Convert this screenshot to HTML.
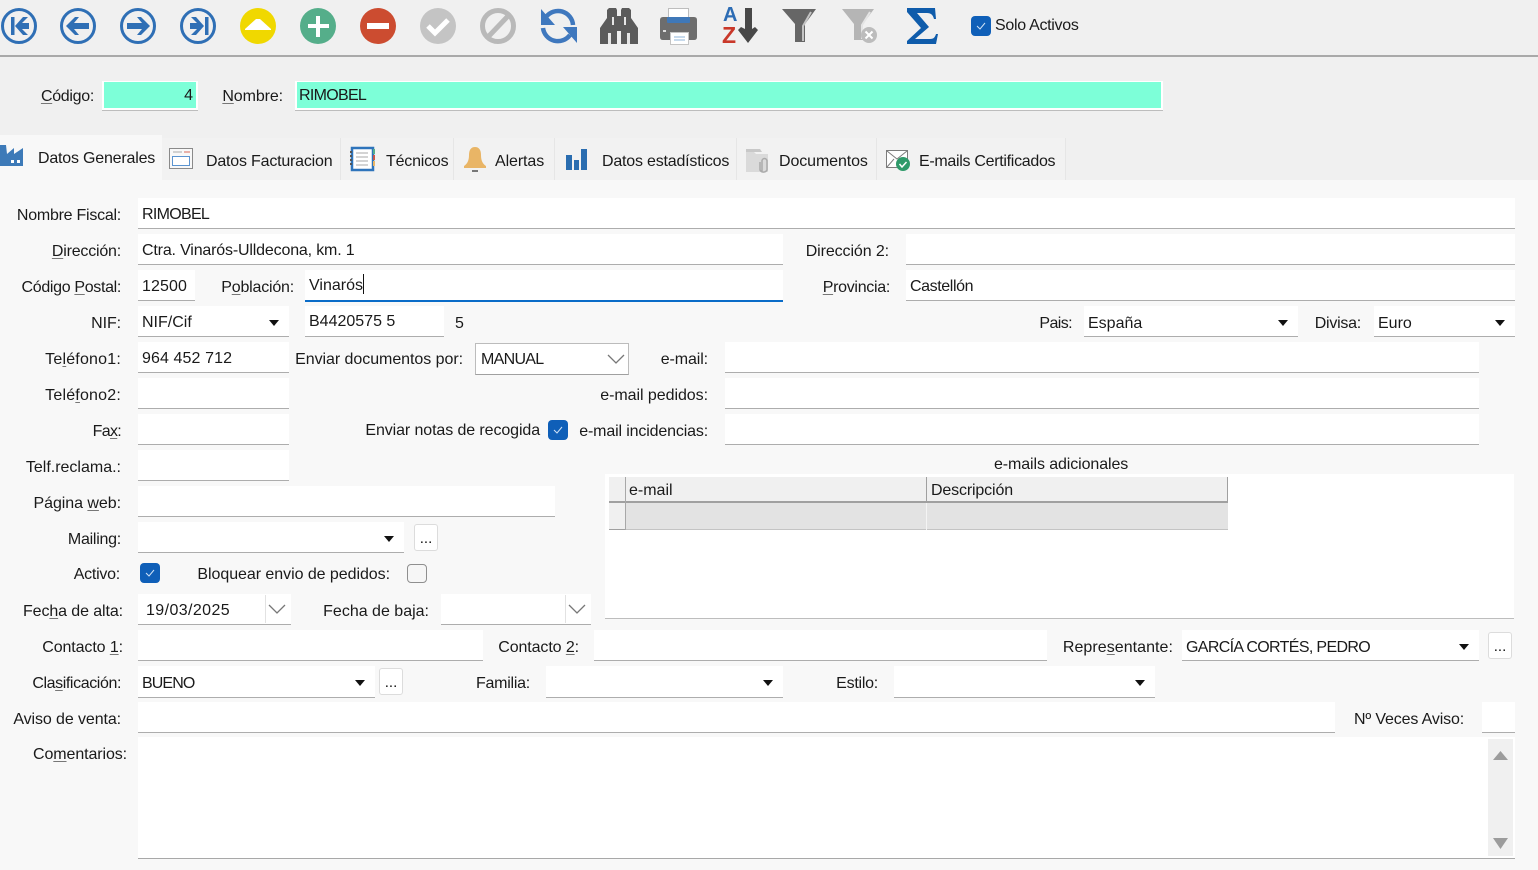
<!DOCTYPE html>
<html><head><meta charset="utf-8"><style>
html,body{margin:0;padding:0}
body{width:1538px;height:870px;overflow:hidden;position:relative;background:#f8f8f8;font-family:"Liberation Sans",sans-serif;font-size:16px;color:#1a1a1a}
.a{position:absolute}
.l{position:absolute;height:36px;line-height:36px;margin-top:2px;white-space:nowrap;letter-spacing:-.1px}
.f{position:absolute;line-height:33px;background:#fff;border-bottom:1px solid #adadad;padding-left:4px;box-sizing:border-box;height:31px;white-space:nowrap}
.c::after{content:"";position:absolute;right:10px;top:14px;border:5.5px solid transparent;border-top:6px solid #111;border-bottom:0}
.b{position:absolute;width:24px;height:27px;background:#fff;border:1px solid #dcdcdc;border-radius:3px;box-sizing:border-box;text-align:center;line-height:28px;font-size:15px;color:#111}
.ck{position:absolute;width:20px;height:20px;border-radius:4px;background:#0f5fb8}
.ck svg{position:absolute;left:0;top:0}
.t{position:absolute;top:138px;height:42px;background:#f2f2f2;border-right:1px solid #e6e6e6;box-sizing:border-box}
.tt{position:absolute;line-height:20px;white-space:nowrap;letter-spacing:-.2px}
.q{position:absolute;top:81px;height:29px;line-height:28px;background:#7dffd8;border:solid #fff;border-width:1px 2px 2px 2px;box-shadow:0 1px 0 #bdbdbd;box-sizing:border-box;white-space:nowrap}
u{text-decoration-color:#777;text-decoration-thickness:1px;text-underline-offset:2px}
</style></head><body>
<div class="a" style="left:0;top:0;width:1538px;height:180px;background:#f0f0f0"></div>
<div class="a" style="left:0;top:55px;width:1538px;height:2px;background:#a9a9a9"></div>

<svg class="a" style="left:0;top:0" width="1538" height="56" viewBox="0 0 1538 56">
<g fill="none" stroke="#2f6fb5" stroke-width="3"><circle cx="19" cy="26" r="16.5"/><circle cx="78" cy="26" r="16.5"/><circle cx="138" cy="26" r="16.5"/><circle cx="198" cy="26" r="16.5"/></g>
<g fill="#2f6fb5">
<rect x="11" y="17" width="3.5" height="18"/><path d="M15 26l8-9h5l-6 6h7v6h-7l6 6h-5z"/>
<path d="M66 26l9-9h4l-5 6h15v6H74l5 6h-4z"/>
<path d="M150 26l-9-9h-4l5 6h-15v6h15l-5 6h4z"/>
<rect x="205" y="17" width="3.5" height="18"/><path d="M204 26l-8-9h-5l6 6h-7v6h7l-6 6h5z"/>
</g>
<circle cx="258" cy="26" r="18" fill="#f0d800"/><path d="M258 19h2l11 10v1h-26v-1l11-10z" fill="#fff"/>
<circle cx="318" cy="26" r="18" fill="#55ae8a"/><path d="M316 16h4v8h9v4h-9v9h-4v-9h-8v-4h8z" fill="#fff"/>
<circle cx="378" cy="26" r="18" fill="#cc4c30"/><rect x="367" y="23" width="22" height="6" fill="#fff"/>
<circle cx="438" cy="26" r="18" fill="#c4c4c4"/><path d="M428 26l7 7 13-13" fill="none" stroke="#fff" stroke-width="5"/>
<circle cx="498" cy="26" r="15.5" fill="none" stroke="#b9b9b9" stroke-width="5"/><path d="M488 37l21-22" stroke="#b9b9b9" stroke-width="5"/>
<g fill="none" stroke="#3f78be" stroke-width="4.500"><path d="M546 17A15 15 0 0 1 573 25"/><path d="M570 35A15 15 0 0 1 543 28"/></g>
<path d="M541 9v16h14zM577 43V27h-14z" fill="#3f78be"/>
<path d="M600 44V28l7-10V10l2-2h7l1 2v6h4v-6l1-2h7l2 2v8l7 10v16H621V31h-4v13z" fill="#5b5b5b"/>
<path d="M612 17h2v8h-2zM624 17h2v8h-2zM608 33h3v11h-3zM627 33h3v11h-3z" fill="#e6e6e6"/>
<path d="M660 20q0-3 3-3h31q3 0 3 3v17q0 3-3 3h-31q-3 0-3-3z" fill="#6d6d6d"/><rect x="668.500" y="8.500" width="20" height="9" fill="#fff" stroke="#bdbdbd"/><rect x="667" y="17" width="23" height="6" rx="1" fill="#3f78b8"/><rect x="663" y="30" width="3" height="2" fill="#ddd"/><rect x="670.500" y="32.500" width="18" height="12" fill="#fff" stroke="#c4c4c4"/><path d="M674 37h11M674 40h11" stroke="#8fb4da"/>
<text x="723" y="21" font-family="Liberation Sans" font-weight="700" font-size="20" fill="#2d6cb4">A</text><text x="722" y="43" font-family="Liberation Sans" font-weight="700" font-size="23" fill="#c9382a">Z</text>
<path d="M745 8h7v21l3-2 3 3-10 13-10-13 3-3 4 2z" fill="#484848"/>
<path d="M782 9h34l-11 15v18h-10V24z" fill="#666"/><path d="M811 12l-8 14v15" stroke="#c4c4c4" stroke-width="2" fill="none"/>
<path d="M842 9h32l-11 15v16h-9V24z" fill="#b5b5b5"/><path d="M870 12l-8 13v14" stroke="#e4e4e4" stroke-width="2" fill="none"/><circle cx="869" cy="35" r="8" fill="#bcbcbc"/><path d="M865.500 31.500l7 7m0-7l-7 7" stroke="#fff" stroke-width="2"/>
<path d="M907 8H935L936 19H934C933 15 931 13 927 13H917L929 27 915 39H930C934 39 935 37 936 34H938L936 44H907V41L921 28 907 12Z" fill="#0f5cab"/>
</svg>
<div class="ck" style="left:971px;top:16px"><svg width="20" height="20"><path d="M6 10l3 3 5-6" fill="none" stroke="#cfe2f6"/></svg></div>
<div class="tt" style="left:995px;top:16px;letter-spacing:-.3px">Solo Activos</div>

<div class="l" style="right:1444px;top:77px;letter-spacing:-.3px"><u>C</u>ódigo:</div>
<div class="q" style="left:102px;width:96px;text-align:right;padding-right:3px">4</div>
<div class="l" style="right:1255px;top:77px"><u>N</u>ombre:</div>
<div class="q" style="left:295px;width:868px;padding-left:2px;letter-spacing:-.7px">RIMOBEL</div>

<!-- tabs -->
<div class="t" style="left:162px;width:179px"></div><div class="t" style="left:341px;width:113px"></div><div class="t" style="left:454px;width:101px"></div><div class="t" style="left:555px;width:182px"></div><div class="t" style="left:737px;width:140px"></div><div class="t" style="left:877px;width:189px"></div>
<div class="a" style="left:0;top:135px;width:162px;height:46px;background:#f8f8f8"></div>
<div class="tt" style="left:38px;top:149px">Datos Generales</div>
<div class="tt" style="left:206px;top:152px">Datos Facturacion</div>
<div class="tt" style="left:386px;top:152px">Técnicos</div>
<div class="tt" style="left:495px;top:152px;letter-spacing:-.1px">Alertas</div>
<div class="tt" style="left:602px;top:152px">Datos estadísticos</div>
<div class="tt" style="left:779px;top:152px;letter-spacing:-.1px">Documentos</div>
<div class="tt" style="left:919px;top:152px;letter-spacing:-.3px">E-mails Certificados</div>
<svg class="a" style="left:0;top:140px" width="920" height="36" viewBox="0 140 920 36">
<path d="M0 166V145h6l1 9 7-6v6l9-6v18z" fill="#3d7ab8"/><path d="M11 160h3v3h-3zM17 160h3v3h-3z" fill="#fff"/>
<rect x="169.500" y="148.500" width="23" height="20" fill="#f8f8f8" stroke="#8a8a8a"/><path d="M173 152h9" stroke="#aaa"/><path d="M184 152h6" stroke="#d86a5a"/><rect x="172.500" y="156.500" width="17" height="9" fill="#fff" stroke="#5b94d0"/>
<rect x="352" y="148" width="21" height="22" fill="#fff" stroke="#2e74bb" stroke-width="2.500"/><path d="M356 153h12M356 157h12M356 161h12M356 165h12" stroke="#aaa"/><path d="M351 151v16" stroke="#555" stroke-dasharray="2 2" stroke-width="2"/><path d="M374 149v5" stroke="#55ae8a" stroke-width="2"/><path d="M374 155v5" stroke="#c9584a" stroke-width="2"/><path d="M374 161v5" stroke="#e9b566" stroke-width="2"/>
<path d="M475 147c4 0 6 3 6 8 0 6 2 9 5 11v2h-22v-2c3-2 5-5 5-11 0-5 2-8 6-8z" fill="#e9b566"/><path d="M472 170h6v2h-6z" fill="#777"/>
<path d="M566 155h6v15h-6zM574 160h5v10h-5zM581 149h6v21h-6z" fill="#2a6db0"/>
<path d="M746 152h8l2 2h12v18h-22z" fill="#dadada"/><path d="M746 149h14l2 3h-16z" fill="#c8c8c8"/><path d="M762 172v-11a2.500 2.500 0 0 1 5 0v9a4 4 0 0 1-7 0v-8" fill="none" stroke="#aaa" stroke-width="1.500"/>
<rect x="886.500" y="150.500" width="21" height="17" fill="#fff" stroke="#7c7c7c"/><path d="M887 151l10 8 10-8M887 167l7-8" fill="none" stroke="#7c7c7c"/><circle cx="903" cy="164" r="7" fill="#2f9a6a"/><path d="M899.500 164l2.500 3 4.500-5" fill="none" stroke="#fff" stroke-width="1.500"/>
</svg>

<!-- form -->
<div class="l" style="right:1417px;top:196px;letter-spacing:-.25px">Nombre Fiscal:</div>
<div class="f" style="left:138px;top:198px;width:1377px;letter-spacing:-.7px">RIMOBEL</div>

<div class="l" style="right:1417px;top:232px;letter-spacing:-.2px"><u>D</u>irección:</div>
<div class="f" style="left:138px;top:234px;width:645px;letter-spacing:-.17px">Ctra. Vinarós-Ulldecona, km. 1</div>
<div class="l" style="right:649px;top:232px">Dirección 2:</div>
<div class="f" style="left:906px;top:234px;width:609px"></div>

<div class="l" style="right:1417px;top:268px;letter-spacing:-.33px">Código <u>P</u>ostal:</div>
<div class="f" style="left:138px;top:270px;width:57px;letter-spacing:.1px">12500</div>
<div class="l" style="right:1244px;top:268px;letter-spacing:-.2px">P<u>o</u>blación:</div>
<div class="f" style="left:305px;top:270px;width:478px;height:32px;border-bottom:2px solid #0a6cc8;line-height:32px">Vinarós<span style="display:inline-block;width:1px;height:20px;background:#111;vertical-align:-4px"></span></div>
<div class="l" style="right:648px;top:268px;letter-spacing:-.3px"><u>P</u>rovincia:</div>
<div class="f" style="left:906px;top:270px;width:609px;letter-spacing:-.4px">Castellón</div>

<div class="l" style="right:1417px;top:304px">NIF:</div>
<div class="f c" style="left:138px;top:306px;width:151px">NIF/Cif</div>
<div class="f" style="left:305px;top:306px;width:139px;line-height:32px">B4420575 5</div>
<div class="l" style="left:455px;top:304px">5</div>
<div class="l" style="right:466px;top:304px;letter-spacing:-.6px">Pais:</div>
<div class="f c" style="left:1084px;top:306px;width:214px;line-height:35px">España</div>
<div class="l" style="right:177px;top:304px;letter-spacing:-.25px">Divisa:</div>
<div class="f c" style="left:1374px;top:306px;width:141px;line-height:35px">Euro</div>

<div class="l" style="right:1417px;top:340px;letter-spacing:.2px">Te<u>l</u>éfono1:</div>
<div class="f" style="left:138px;top:342px;width:151px;letter-spacing:.1px">964 452 712</div>
<div class="l" style="right:1075px;top:340px;letter-spacing:-.05px">Enviar documentos por:</div>
<div class="a" style="left:475px;top:343px;width:154px;height:32px;box-sizing:border-box;background:#fff;border:1px solid #bcbcbc;border-bottom-color:#a0a0a0;padding-left:5px;line-height:31px;letter-spacing:-.7px">MANUAL
<svg class="a" style="left:131px;top:9px" width="18" height="12"><path d="M1 2l8 8 8-8" fill="none" stroke="#777" stroke-width="1.300"/></svg></div>
<div class="l" style="right:830px;top:340px">e-mail:</div>
<div class="f" style="left:725px;top:342px;width:754px"></div>

<div class="l" style="right:1417px;top:376px;letter-spacing:.2px">Telé<u>f</u>ono2:</div>
<div class="f" style="left:138px;top:378px;width:151px"></div>
<div class="l" style="right:830px;top:376px;letter-spacing:-.05px">e-mail pedidos:</div>
<div class="f" style="left:725px;top:378px;width:754px"></div>

<div class="l" style="right:1417px;top:412px;letter-spacing:-.7px">Fa<u>x</u>:</div>
<div class="f" style="left:138px;top:414px;width:151px"></div>
<div class="l" style="right:998px;top:411px">Enviar notas de recogida</div>
<div class="ck" style="left:548px;top:420px"><svg width="20" height="20"><path d="M6 10l3 3 5-6" fill="none" stroke="#cfe2f6"/></svg></div>
<div class="l" style="right:830px;top:412px;letter-spacing:-.15px">e-mail incidencias:</div>
<div class="f" style="left:725px;top:414px;width:754px"></div>

<div class="l" style="right:1417px;top:448px;letter-spacing:0">Telf.reclama.:</div>
<div class="f" style="left:138px;top:450px;width:151px"></div>
<div class="tt" style="left:994px;top:455px;letter-spacing:-.1px">e-mails adicionales</div>

<!-- grid -->
<div class="a" style="left:605px;top:474px;width:909px;height:145px;background:#fff;border-bottom:1px solid #bdbdbd;box-sizing:border-box"></div>
<div class="a" style="left:609px;top:477px;width:619px;height:26px;background:#f0f0f0;border-bottom:2px solid #a0a0a0;box-sizing:border-box"></div>
<div class="a" style="left:609px;top:503px;width:619px;height:27px;background:#e3e3e3;border-bottom:1px solid #c4c4c4;box-sizing:border-box"></div>
<div class="a" style="left:609px;top:503px;width:16px;height:27px;background:#f0f0f0;border-bottom:1px solid #a0a0a0;box-sizing:border-box"></div>
<div class="a" style="left:625px;top:477px;width:1px;height:53px;background:#a8a8a8"></div>
<div class="a" style="left:926px;top:477px;width:1px;height:26px;background:#a0a0a0"></div>
<div class="a" style="left:926px;top:503px;width:1px;height:27px;background:#f4f4f4"></div>
<div class="a" style="left:1227px;top:477px;width:1px;height:26px;background:#a0a0a0"></div>
<div class="tt" style="left:629px;top:481px;letter-spacing:0">e-mail</div>
<div class="tt" style="left:931px;top:481px;letter-spacing:-.15px">Descripción</div>

<div class="l" style="right:1417px;top:484px;letter-spacing:-.05px">Página <u>w</u>eb:</div>
<div class="f" style="left:138px;top:486px;width:417px"></div>

<div class="l" style="right:1417px;top:520px;letter-spacing:-.25px">Mailing:</div>
<div class="f c" style="left:138px;top:522px;width:266px"></div>
<div class="b" style="left:414px;top:524px">...</div>

<div class="l" style="right:1418px;top:555px;letter-spacing:-.25px">Activo:</div>
<div class="ck" style="left:140px;top:563px"><svg width="20" height="20"><path d="M6 10l3 3 5-6" fill="none" stroke="#cfe2f6"/></svg></div>
<div class="l" style="right:1148px;top:555px;letter-spacing:-.05px">Bloquear envio de pedidos:</div>
<div class="a" style="left:407px;top:564px;width:20px;height:19px;box-sizing:border-box;border:1.500px solid #8f8f8f;border-radius:4px;background:#f6f6f6"></div>

<div class="l" style="right:1415px;top:592px">Fec<u>h</u>a de alta:</div>
<div class="f" style="left:138px;top:594px;width:153px;padding-left:8px;letter-spacing:.4px">19/03/2025
<div class="a" style="left:127px;top:1px;width:1px;height:28px;background:#e2e2e2"></div>
<svg class="a" style="left:130px;top:9px" width="18" height="12"><path d="M1 2l8 8 8-8" fill="none" stroke="#777" stroke-width="1.300"/></svg></div>
<div class="l" style="right:1109px;top:592px;letter-spacing:0">Fecha de baja:</div>
<div class="f" style="left:441px;top:594px;width:150px">
<div class="a" style="left:124px;top:1px;width:1px;height:28px;background:#e2e2e2"></div>
<svg class="a" style="left:127px;top:9px" width="18" height="12"><path d="M1 2l8 8 8-8" fill="none" stroke="#777" stroke-width="1.300"/></svg></div>

<div class="l" style="right:1415px;top:628px">Contacto <u>1</u>:</div>
<div class="f" style="left:138px;top:630px;width:345px"></div>
<div class="l" style="right:959px;top:628px">Contacto <u>2</u>:</div>
<div class="f" style="left:594px;top:630px;width:453px"></div>
<div class="l" style="right:365px;top:628px;letter-spacing:.05px">Repre<u>s</u>entante:</div>
<div class="f c" style="left:1182px;top:630px;width:297px;line-height:35px;letter-spacing:-.65px">GARCÍA CORTÉS, PEDRO</div>
<div class="b" style="left:1488px;top:632px">...</div>

<div class="l" style="right:1417px;top:664px;letter-spacing:-.4px">Cla<u>s</u>ificación:</div>
<div class="f c" style="left:138px;top:666px;width:237px;height:32px;line-height:35px;letter-spacing:-.9px">BUENO</div>
<div class="b" style="left:379px;top:668px">...</div>
<div class="l" style="right:1008px;top:664px;letter-spacing:-.25px">Familia:</div>
<div class="f c" style="left:546px;top:666px;width:237px;height:32px"></div>
<div class="l" style="right:660px;top:664px;letter-spacing:-.25px">Estilo:</div>
<div class="f c" style="left:894px;top:666px;width:261px;height:32px"></div>

<div class="l" style="right:1417px;top:700px">Aviso de venta:</div>
<div class="f" style="left:138px;top:702px;width:1197px"></div>
<div class="l" style="right:74px;top:700px;letter-spacing:-.15px">Nº Veces Aviso:</div>
<div class="f" style="left:1482px;top:702px;width:33px"></div>

<div class="l" style="right:1411px;top:735px">Co<u>m</u>entarios:</div>
<div class="a" style="left:138px;top:737px;width:1377px;height:122px;background:#fff;border-bottom:1px solid #a8a8a8;box-sizing:border-box"></div>
<div class="a" style="left:1488px;top:739px;width:25px;height:117px;background:#f0f0f0"></div>
<svg class="a" style="left:1488px;top:739px" width="25" height="117"><path d="M5 21l7.500-9 7.500 9z" fill="#9c9c9c"/><path d="M5 99l7.500 11 7.500-11z" fill="#9c9c9c"/></svg>
</body></html>
